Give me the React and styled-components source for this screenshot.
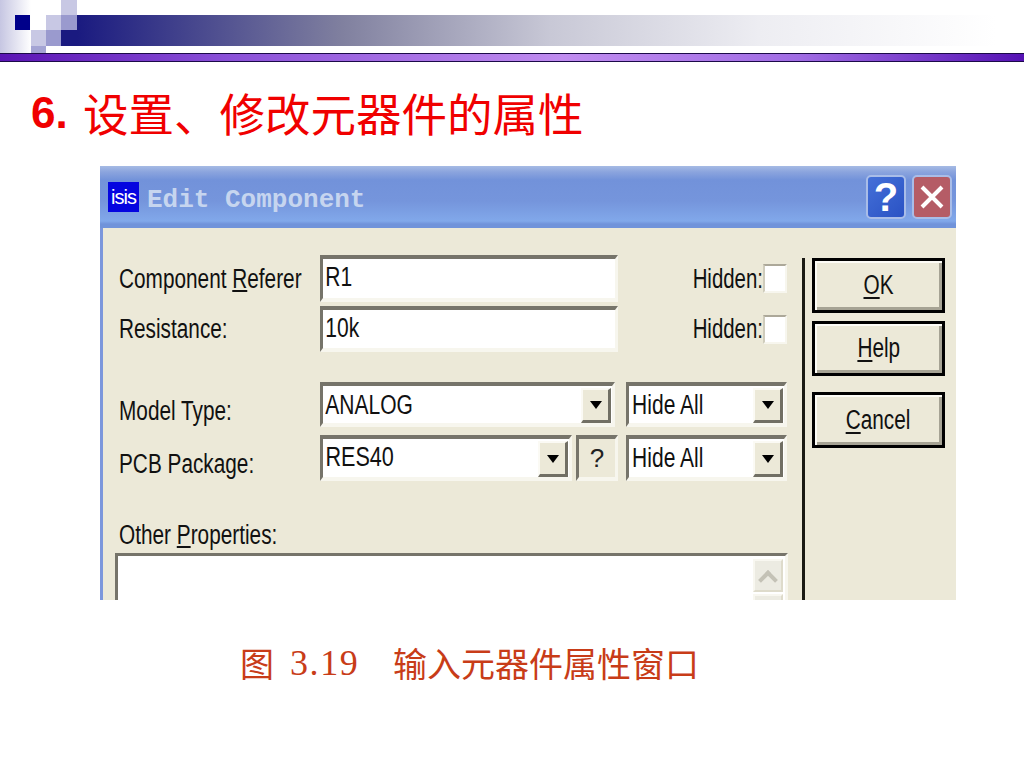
import React from 'react'
import styled, { createGlobalStyle } from 'styled-components'

const GlobalStyle = createGlobalStyle`
    html, body {
        margin: 0;
        padding: 0;
        background: #fff;
    }
`

const Slide = styled.div`
    width: 1024px;
    height: 768px;
    overflow: hidden;
    background: #fff;
    display: flex;
    flex-direction: column;
    font-family: "Liberation Sans", Arial, sans-serif;
`
const Header = styled.div`
    display: flex;
    height: 53px;
    flex-shrink: 0;
`
const HeaderBar = styled.div`
    flex: 1;
    height: 31px;
    margin-top: 15px;
    background: linear-gradient(to right, #1a1a80 0%, #80809f 28%, #c8c8d6 50%, #ededf2 72%, #fff 97%);
`
const Rule = styled.div`
    height: 9px;
    flex-shrink: 0;
    border-top: 1px solid #1c0a4a;
    border-bottom: 1px solid #1c0a4a;
    box-sizing: border-box;
    background: linear-gradient(to right, #5a14b4 0%, #8a50d8 22%, #c08cf0 55%, #a06ce4 78%, #5512b4 100%);
`
const Title = styled.h1`
    margin: 20px 0 0 31px;
    height: 60px;
    display: flex;
    align-items: center;
    color: #f00000;
    font-weight: normal;
    white-space: nowrap;
`
const TitleNum = styled.span`
    font: bold 44px "Liberation Sans", sans-serif;
    width: 52px;
    padding-top: 2px;
`
const TitleText = styled.span`
    font: 45.5px "Noto Sans CJK SC", sans-serif;
    line-height: 60px;
`
const Dialog = styled.div`
    margin: 24px 0 0 100px;
    width: 856px;
    height: 434px;
    flex-shrink: 0;
    overflow: hidden;
    display: flex;
    flex-direction: column;
    background: #ece9d8;
`
const TitleBar = styled.div`
    height: 62px;
    flex-shrink: 0;
    box-sizing: border-box;
    padding: 0 4px 0 8px;
    display: flex;
    align-items: center;
    gap: 8px;
    background: linear-gradient(to bottom, #a6bbe4 0, #8ba4de 6px, #7292da 14px, #7595dc 35px, #81a8ea 55px, #7093da 58px, #7093da 62px);
`
const IsisLogo = styled.span`
    width: 31px;
    height: 30px;
    background: #0505e0;
    color: #fff;
    font: 20px "Liberation Sans", sans-serif;
    letter-spacing: -1px;
    display: flex;
    align-items: center;
    justify-content: center;
`
const TitleLabel = styled.span`
    flex: 1;
    padding-top: 5px;
    color: #c6d5ef;
    font: bold 26px "Liberation Mono", monospace;
`
const CapButton = styled.span`
    width: 40px;
    height: 44px;
    box-sizing: border-box;
    border: 2px solid #a9bde8;
    border-radius: 5px;
    color: #fff;
    font: bold 40px "Liberation Sans", sans-serif;
    display: flex;
    align-items: center;
    justify-content: center;
    background: ${p => p.$close ? '#b55c66' : 'linear-gradient(135deg, #4470d8, #2a52c4)'};
    margin-left: ${p => p.$close ? '-2px' : '0'};
`
const CloseMark = styled.svg`
    width: 24px;
    height: 24px;
`
const Body = styled.div`
    flex: 1;
    min-height: 0;
    display: flex;
    border-left: 3px solid #7c97dc;
`
const Form = styled.div`
    width: 699px;
    flex-shrink: 0;
    box-sizing: border-box;
    padding: 27px 0 0 16px;
    display: flex;
    flex-direction: column;
`
const Row = styled.div`
    display: flex;
    align-items: center;
    flex-shrink: 0;
    height: ${p => p.$h}px;
    margin-top: ${p => p.$top || 0}px;
`
const Label = styled.span`
    width: 201px;
    flex-shrink: 0;
    font-size: 27px;
    line-height: 30px;
    color: #111;
    white-space: nowrap;
    display: inline-block;
    transform: scaleX(0.77);
    transform-origin: left;
    padding-top: ${p => p.$drop || 0}px;
`
const Sunken = styled.div`
    box-sizing: border-box;
    height: 100%;
    width: ${p => p.$w}px;
    flex-shrink: 0;
    margin-left: ${p => p.$left || 0}px;
    border-top: 4px solid #76746a;
    border-left: 3px solid #76746a;
    border-right: 3px solid #f7f6ee;
    border-bottom: 4px solid #f7f6ee;
    background: ${p => p.$blank ? '#ece9d8' : '#fff'};
    display: flex;
    align-items: stretch;
`
const FieldText = styled.span`
    flex: 1;
    padding-left: ${p => p.$pad || 3}px;
    font-size: 27px;
    line-height: ${p => p.$line || 36}px;
    color: #111;
    white-space: nowrap;
    display: inline-block;
    transform: scaleX(${p => p.$scale || 0.778});
    transform-origin: left;
`
const ArrowButton = styled.span`
    width: 30px;
    flex-shrink: 0;
    box-sizing: border-box;
    margin: 2px 1px 0 0;
    border-top: 2px solid #fbfaf4;
    border-left: 2px solid #fbfaf4;
    border-right: 3px solid #716f64;
    border-bottom: 3px solid #716f64;
    background: #ece9d8;
    display: flex;
    align-items: center;
    justify-content: center;
    &::after {
        content: "";
        border-top: 8px solid #000;
        border-left: 6px solid transparent;
        border-right: 6px solid transparent;
    }
`
const HelpMark = styled.span`
    flex: 1;
    text-align: center;
    font-size: 26px;
    line-height: 38px;
    color: #222;
`
const HiddenLabel = styled.span`
    width: 145px;
    flex-shrink: 0;
    text-align: right;
    font-size: 27px;
    line-height: 30px;
    color: #111;
    display: inline-block;
    transform: scaleX(0.756);
    transform-origin: right;
`
const Check = styled.span`
    width: 24px;
    height: 29px;
    flex-shrink: 0;
    box-sizing: border-box;
    border-top: 2px solid #aca899;
    border-left: 2px solid #cfccbc;
    border-right: 2px solid #f7f6ee;
    border-bottom: 2px solid #f7f6ee;
    background: #fff;
`
const OtherLabel = styled(Label)`
    margin-top: 36px;
    height: 36px;
    line-height: 36px;
    padding: 0;
`
const PropsBox = styled.div`
    width: 673px;
    height: 90px;
    margin-left: -4px;
    flex-shrink: 0;
    box-sizing: border-box;
    border-top: 3px solid #76746a;
    border-left: 3px solid #76746a;
    border-right: 3px solid #f7f6ee;
    background: #fff;
    display: flex;
    flex-direction: column;
    align-items: flex-end;
    padding: 3px 2px 0 0;
    gap: 2px;
`
const ScrollButton = styled.span`
    width: 30px;
    height: 33px;
    flex-shrink: 0;
    box-sizing: border-box;
    border-top: 2px solid #f8f7f0;
    border-left: 2px solid #f8f7f0;
    border-right: 2px solid #dedbcb;
    border-bottom: 2px solid #dedbcb;
    background: #ecebe2;
    display: flex;
    align-items: center;
    justify-content: center;
    &::after {
        content: "";
        width: 10px;
        height: 10px;
        margin-top: 8px;
        border-top: 4px solid #c4c2b6;
        border-left: 4px solid #c4c2b6;
        transform: rotate(45deg);
    }
`
const Divider = styled.div`
    width: 3px;
    flex-shrink: 0;
    margin-top: 30px;
    background: #1a1a14;
`
const Side = styled.div`
    width: 133px;
    margin-left: 7px;
    padding-top: 30px;
    display: flex;
    flex-direction: column;
`
const DialogButton = styled.span`
    height: ${p => p.$h}px;
    margin-top: ${p => p.$top || 0}px;
    box-sizing: border-box;
    border: 3px solid #000;
    box-shadow: inset 2px 2px 0 #fdfcf6, inset -3px -3px 0 #a6a394;
    background: #ece9d8;
    display: flex;
    align-items: center;
    justify-content: center;
    font-size: 27px;
    color: #111;
    u {
        text-underline-offset: 3px;
    }
`
const ButtonText = styled.span`
    display: inline-block;
    transform: scaleX(0.77);
`
const Caption = styled.div`
    margin: 38px 0 0 240px;
    display: flex;
    align-items: center;
    height: 50px;
    color: #c83c18;
    white-space: nowrap;
    font: 34px/50px "Noto Sans CJK SC", sans-serif;
`
const CaptionNum = styled.span`
    font-family: "Liberation Serif", serif;
    font-size: 36px;
    width: 103px;
    margin-left: 16px;
    letter-spacing: 1.6px;
`

const Logo = () => (
    <svg width="77" height="53" viewBox="0 0 77 53" style={{ flexShrink: 0 }}>
        <defs>
            <linearGradient id="fade" x1="0" x2="1" y1="0" y2="0">
                <stop offset="0" stopColor="#c6c6e2" />
                <stop offset="1" stopColor="#fff" />
            </linearGradient>
        </defs>
        <rect x="0" y="0" width="31" height="53" fill="url(#fade)" />
        <rect x="15" y="15" width="15" height="15" fill="#00008a" />
        <rect x="46" y="15" width="15" height="15" fill="#c8c8e4" />
        <rect x="61" y="0" width="16" height="15" fill="#c8c8e4" />
        <rect x="61" y="15" width="16" height="15" fill="#9a9ace" />
        <rect x="31" y="30" width="15" height="16" fill="#c8c8e4" />
        <rect x="46" y="30" width="15" height="16" fill="#9a9ace" />
        <rect x="61" y="30" width="16" height="16" fill="#1a1a80" />
        <rect x="31" y="46" width="15" height="7" fill="#a4a4d4" />
    </svg>
)

const App = () => {
    return (
        <Slide>
            <GlobalStyle />
            <Header>
                <Logo />
                <HeaderBar />
            </Header>
            <Rule />
            <Title>
                <TitleNum>6.</TitleNum>
                <TitleText>设置、修改元器件的属性</TitleText>
            </Title>
            <Dialog>
                <TitleBar>
                    <IsisLogo>isis</IsisLogo>
                    <TitleLabel>Edit Component</TitleLabel>
                    <CapButton>?</CapButton>
                    <CapButton $close>
                        <CloseMark viewBox="0 0 24 24">
                            <path d="M2 2 L22 22 M22 2 L2 22" stroke="#fff" strokeWidth="4" fill="none" />
                        </CloseMark>
                    </CapButton>
                </TitleBar>
                <Body>
                    <Form>
                        <Row $h={47}>
                            <Label><span>Component <u>R</u>eferer</span></Label>
                            <Sunken $w={298}><FieldText>R1</FieldText></Sunken>
                            <HiddenLabel>Hidden:</HiddenLabel>
                            <Check />
                        </Row>
                        <Row $h={46} $top={4}>
                            <Label>Resistance:</Label>
                            <Sunken $w={298}><FieldText>10k</FieldText></Sunken>
                            <HiddenLabel>Hidden:</HiddenLabel>
                            <Check />
                        </Row>
                        <Row $h={45} $top={30}>
                            <Label $drop={12}>Model Type:</Label>
                            <Sunken $w={295}>
                                <FieldText $line={39}>ANALOG</FieldText>
                                <ArrowButton />
                            </Sunken>
                            <Sunken $w={161} $left={11}>
                                <FieldText $pad={4} $line={39}>Hide All</FieldText>
                                <ArrowButton />
                            </Sunken>
                        </Row>
                        <Row $h={46} $top={8}>
                            <Label $drop={12}>PCB Package:</Label>
                            <Sunken $w={252}>
                                <FieldText $scale={0.8}>RES40</FieldText>
                                <ArrowButton />
                            </Sunken>
                            <Sunken $w={42} $left={4} $blank>
                                <HelpMark>?</HelpMark>
                            </Sunken>
                            <Sunken $w={161} $left={8}>
                                <FieldText $pad={4} $line={39}>Hide All</FieldText>
                                <ArrowButton />
                            </Sunken>
                        </Row>
                        <OtherLabel>Other <u>P</u>roperties:</OtherLabel>
                        <PropsBox>
                            <ScrollButton />
                            <ScrollButton />
                        </PropsBox>
                    </Form>
                    <Divider />
                    <Side>
                        <DialogButton $h={55}><ButtonText><u>O</u>K</ButtonText></DialogButton>
                        <DialogButton $h={55} $top={8}><ButtonText><u>H</u>elp</ButtonText></DialogButton>
                        <DialogButton $h={56} $top={16}><ButtonText><u>C</u>ancel</ButtonText></DialogButton>
                    </Side>
                </Body>
            </Dialog>
            <Caption>
                <span>图</span>
                <CaptionNum>3.19</CaptionNum>
                <span>输入元器件属性窗口</span>
            </Caption>
        </Slide>
    )
}

export default App
